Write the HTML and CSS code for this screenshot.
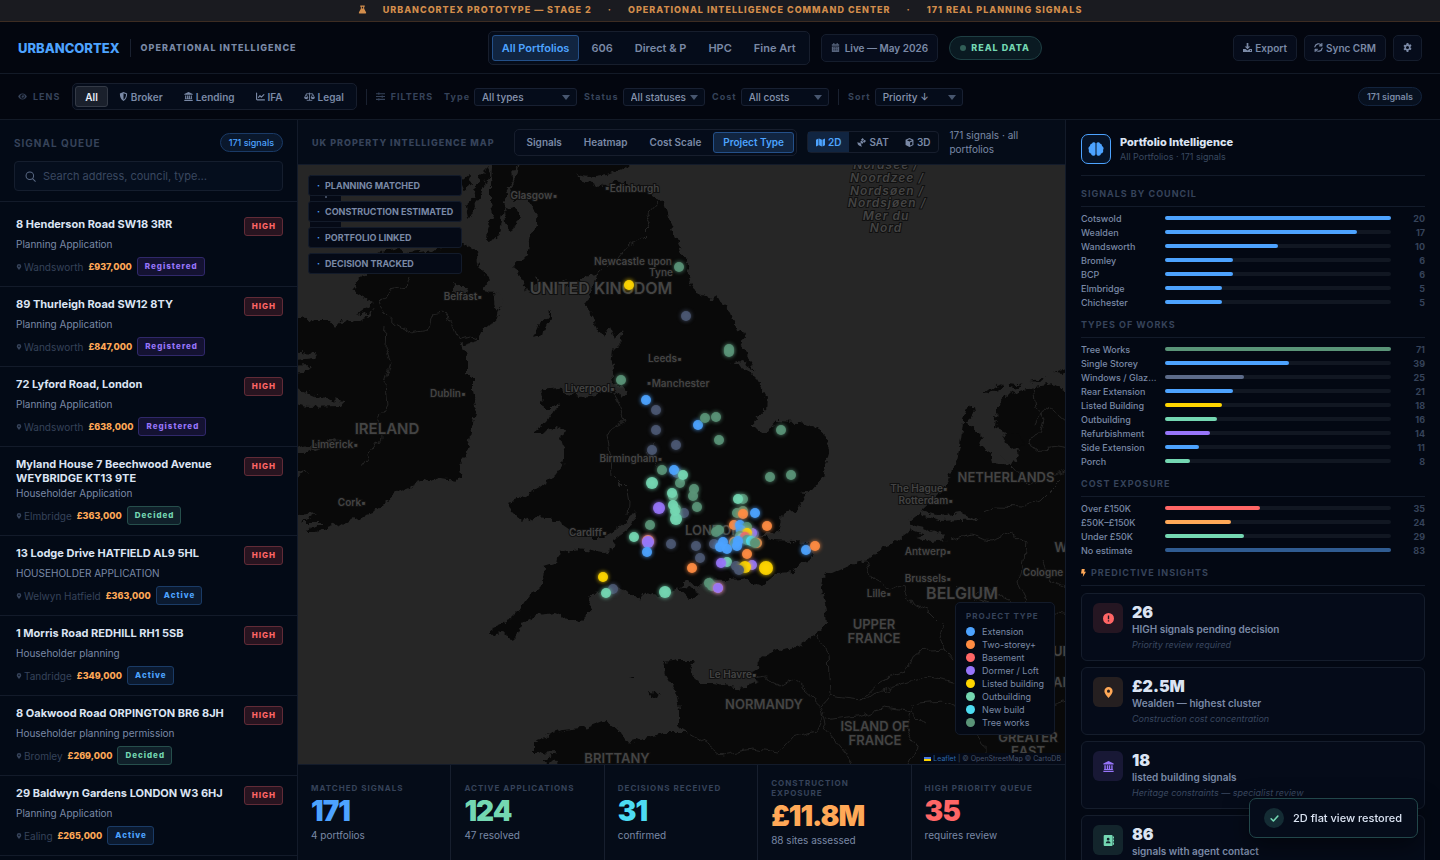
FILE: index.html
```html
<!DOCTYPE html>
<html lang="en">
<head>
    <meta charset="UTF-8">
    <meta name="viewport" content="width=device-width, initial-scale=1.0">
    <title>UrbanCortex - Operational Intelligence</title>
    <link rel="stylesheet" href="styles.css">
</head>
<body>
    <svg class="sprite" aria-hidden="true">
        <symbol id="i-flask" viewBox="0 0 16 16"><path d="M4 1h8v2h-1v3.500l3.300 6.200A1.600 1.600 0 0 1 12.900 15H3.100a1.600 1.600 0 0 1-1.400-2.300L5 6.500V3H4zM6.800 3v3h2.400V3z" fill-rule="evenodd"/></symbol>
        <symbol id="i-eye" viewBox="0 0 16 16"><path d="M8 2.500C4 2.500 1.300 5.500.3 8c1 2.500 3.700 5.500 7.700 5.500s6.700-3 7.700-5.500c-1-2.500-3.700-5.500-7.700-5.500zM8 4a4 4 0 1 1 0 8 4 4 0 0 1 0-8zm0 1.500A2 2 0 0 1 6 8a2.300 2.300 0 1 0 2-2.500z" fill-rule="evenodd"/></symbol>
        <symbol id="i-shield" viewBox="0 0 16 16"><path d="M8 0l6.500 2.600C14.500 8.500 12.500 13.500 8 16 3.500 13.500 1.500 8.500 1.500 2.600zM8 2.200v11.500c3-2 4.400-5.500 4.500-9.700z" fill-rule="evenodd"/></symbol>
        <symbol id="i-bank" viewBox="0 0 16 16"><path d="M8 0l7.500 3.500V5H.5V3.500zM2 6h2v5.500h1.500V6h2v5.500h1V6h2v5.500H12V6h2v5.500l1 1.500H1l1-1.500zM.5 14h15v2H.5z"/></symbol>
        <symbol id="i-chart" viewBox="0 0 16 16"><path d="M1 2v10.500a1.500 1.500 0 0 0 1.500 1.500H15M4.500 9.500L7 6.500l2.500 2.500L14 4.500" fill="none" stroke="currentColor" stroke-width="2" stroke-linecap="round" stroke-linejoin="round"/></symbol>
        <symbol id="i-scale" viewBox="0 0 20 16"><path d="M4 3h12M10 1v13.500M5 15h10M1 10l3-6 3 6zM13 10l3-6 3 6z" fill="none" stroke="currentColor" stroke-width="1.500" stroke-linejoin="round"/><path d="M.5 10h7a3.500 3 0 0 1-7 0zM12.500 10h7a3.500 3 0 0 1-7 0z"/></symbol>
        <symbol id="i-sliders" viewBox="0 0 16 16"><path d="M0 3h16M0 8h16M0 13h16M5 1v4M11 6v4M5 11v4" fill="none" stroke="currentColor" stroke-width="2"/></symbol>
        <symbol id="i-calendar" viewBox="0 0 16 16"><path d="M4 0h2v2h4V0h2v2h2.500v3h-13V2H4zM1.500 6h13v10h-13zM4 8v1.500h2V8zm3 0v1.500h2V8zm3 0v1.500h2V8zm-6 3.500V13h2v-1.500zm3 0V13h2v-1.500zm3 0V13h2v-1.500z" fill-rule="evenodd"/></symbol>
        <symbol id="i-download" viewBox="0 0 16 16"><path d="M6.500 0h3v6H13L8 11 3 6h3.500zM0 10.500h4.500L8 13.500l3.500-3H16V16H0zM12.500 12.500v1.500H14v-1.500z" fill-rule="evenodd"/></symbol>
        <symbol id="i-sync" viewBox="0 0 16 16"><path d="M1.500 7a6.500 6.500 0 0 1 12-2.500M14.500 9a6.500 6.500 0 0 1-12 2.500M14 .8V5H9.800M2 15.200V11h4.200" fill="none" stroke="currentColor" stroke-width="2" stroke-linecap="round" stroke-linejoin="round"/></symbol>
        <symbol id="i-gear" viewBox="0 0 16 16"><path d="M6.500 0h3l.5 2.300 1.400.8 2.200-.7 1.500 2.600-1.700 1.600v1.800l1.700 1.600-1.500 2.600-2.200-.7-1.400.8L9.500 16h-3L6 13.200l-1.400-.8-2.200.7L.9 10.500l1.700-1.600V7.100L.9 5.500l1.500-2.600 2.200.7L6 2.300zM8 5.300a2.700 2.700 0 1 0 0 5.400 2.700 2.700 0 0 0 0-5.400z" fill-rule="evenodd"/></symbol>
        <symbol id="i-search" viewBox="0 0 16 16"><path d="M7 1.500a5.500 5.500 0 1 1 0 11 5.500 5.500 0 0 1 0-11zM11 11l4 4" fill="none" stroke="currentColor" stroke-width="1.500" stroke-linecap="round"/></symbol>
        <symbol id="i-pin" viewBox="0 0 16 16"><path d="M8 0a6 6 0 0 1 6 6c0 3-3 6.500-6 10C5 12.500 2 9 2 6a6 6 0 0 1 6-6zm0 3.800a2.200 2.200 0 1 0 0 4.400 2.200 2.200 0 0 0 0-4.400z" fill-rule="evenodd"/></symbol>
        <symbol id="i-map" viewBox="0 0 16 16"><path d="M0 3l4.500-2v12L0 15zM5.500 1l5 2v12l-5-2zM11.500 3L16 1v12l-4.500 2z"/></symbol>
        <symbol id="i-sat" viewBox="0 0 16 16"><path d="M1 7a7 7 0 0 0 8 8l-2-3 1-1-3-3-1 1zM7 3l3-3 2.500 2.500L10 5.500zM10.500 6l3-3L16 5.500l-3 3zM8 4.500L11.500 8 9 10.500 5.500 7z"/></symbol>
        <symbol id="i-cube" viewBox="0 0 16 16"><path d="M8 0l7 3.200v9.300L8 16l-7-3.500V3.200zM8 2L3.500 4 8 6.200 12.500 4zM9 8v5.500l4-2V6z" fill-rule="evenodd"/></symbol>
        <symbol id="i-brain" viewBox="0 0 16 16"><path d="M7.500 2.300A2 2 0 0 0 4 2.500 2.300 2.300 0 0 0 2 5a2.600 2.600 0 0 0-1 4 2.600 2.600 0 0 0 2 3.600 2.300 2.300 0 0 0 4.500.600zM8.500 2.300A2 2 0 0 1 12 2.500 2.300 2.300 0 0 1 14 5a2.600 2.600 0 0 1 1 4 2.600 2.600 0 0 1-2 3.600 2.300 2.300 0 0 1-4.500.600z"/></symbol>
        <symbol id="i-bolt" viewBox="0 0 10 16"><path d="M1.500 0h6L6.500 5.500H10L3.500 16l1-7H0z"/></symbol>
        <symbol id="i-alert" viewBox="0 0 16 16"><path d="M8 0a8 8 0 1 1 0 16A8 8 0 0 1 8 0zM7 3.500v5.500h2V3.500zM7 10.500v2h2v-2z" fill-rule="evenodd"/></symbol>
        <symbol id="i-book" viewBox="0 0 16 16"><path d="M2.500 0h10A1.500 1.500 0 0 1 14 1.500v13a1.500 1.500 0 0 1-1.500 1.500h-10A1.500 1.500 0 0 1 1 14.500v-13A1.500 1.500 0 0 1 2.500 0zM7.500 4a2 2 0 1 0 0 4 2 2 0 0 0 0-4zM4 12h7a3 3 0 0 0-3-3H7a3 3 0 0 0-3 3zM14.500 2H16v3h-1.500zM14.500 6.500H16v3h-1.500zM14.500 11H16v3h-1.500z" fill-rule="evenodd"/></symbol>
        <symbol id="i-check" viewBox="0 0 16 16"><path d="M2 8.500l4 4 8-9" fill="none" stroke="currentColor" stroke-width="2.800" stroke-linecap="round" stroke-linejoin="round"/></symbol>
    </svg>

    <div class="banner">
        <svg class="icon"><use href="#i-flask"/></svg>
        <span>URBANCORTEX PROTOTYPE — STAGE 2</span><span>·</span><span>OPERATIONAL INTELLIGENCE COMMAND CENTER</span><span>·</span><span>171 REAL PLANNING SIGNALS</span>
    </div>

    <header class="topbar">
        <div class="brand">
            <span class="brand-name">URBANCORTEX</span>
            <span class="brand-sub">OPERATIONAL INTELLIGENCE</span>
        </div>
        <div class="topbar-center">
            <nav class="segment portfolios">
                <button type="button" class="active">All Portfolios</button>
                <button type="button">606</button>
                <button type="button">Direct &amp; P</button>
                <button type="button">HPC</button>
                <button type="button">Fine Art</button>
            </nav>
            <span class="live"><svg class="icon"><use href="#i-calendar"/></svg>Live — May 2026</span>
            <span class="real-data">REAL DATA</span>
        </div>
        <div class="actions">
            <button type="button"><svg class="icon"><use href="#i-download"/></svg>Export</button>
            <button type="button"><svg class="icon"><use href="#i-sync"/></svg>Sync CRM</button>
            <button type="button" aria-label="Settings"><svg class="icon"><use href="#i-gear"/></svg></button>
        </div>
    </header>

    <div class="filterbar">
        <span class="bar-label lens-label"><svg class="icon"><use href="#i-eye"/></svg>LENS</span>
        <div class="segment lens">
            <button type="button" class="active">All</button>
            <button type="button"><svg class="icon"><use href="#i-shield"/></svg>Broker</button>
            <button type="button"><svg class="icon"><use href="#i-bank"/></svg>Lending</button>
            <button type="button"><svg class="icon"><use href="#i-chart"/></svg>IFA</button>
            <button type="button"><svg class="icon wide"><use href="#i-scale"/></svg>Legal</button>
        </div>
        <span class="divider"></span>
        <span class="bar-label"><svg class="icon"><use href="#i-sliders"/></svg>FILTERS</span>
        <div class="field field-type"><label for="f-type">Type</label><span class="select"><select id="f-type"><option>All types</option></select></span></div>
        <div class="field field-status"><label for="f-status">Status</label><span class="select"><select id="f-status"><option>All statuses</option></select></span></div>
        <div class="field field-cost"><label for="f-cost">Cost</label><span class="select"><select id="f-cost"><option>All costs</option></select></span></div>
        <span class="divider"></span>
        <div class="field field-sort"><label for="f-sort">Sort</label><span class="select"><select id="f-sort"><option>Priority ↓</option></select></span></div>
        <span class="pill count">171 signals</span>
    </div>

    <main class="workspace">
        <aside class="queue">
            <div class="queue-head">
                <div class="queue-title"><h2>SIGNAL QUEUE</h2><span class="pill">171 signals</span></div>
                <label class="search"><svg class="icon"><use href="#i-search"/></svg><input type="text" aria-label="Search signals" placeholder="Search address, council, type…"></label>
            </div>
            <div class="queue-list">
                <article class="signal">
                    <div class="signal-top"><h3>8 Henderson Road SW18 3RR</h3><span class="priority">HIGH</span></div>
                    <p>Planning Application</p>
                    <div class="meta"><svg class="icon"><use href="#i-pin"/></svg><span>Wandsworth</span><b>£937,000</b><span class="status registered">Registered</span></div>
                </article>
                <article class="signal">
                    <div class="signal-top"><h3>89 Thurleigh Road SW12 8TY</h3><span class="priority">HIGH</span></div>
                    <p>Planning Application</p>
                    <div class="meta"><svg class="icon"><use href="#i-pin"/></svg><span>Wandsworth</span><b>£847,000</b><span class="status registered">Registered</span></div>
                </article>
                <article class="signal">
                    <div class="signal-top"><h3>72 Lyford Road, London</h3><span class="priority">HIGH</span></div>
                    <p>Planning Application</p>
                    <div class="meta"><svg class="icon"><use href="#i-pin"/></svg><span>Wandsworth</span><b>£638,000</b><span class="status registered">Registered</span></div>
                </article>
                <article class="signal">
                    <div class="signal-top"><h3>Myland House 7 Beechwood Avenue WEYBRIDGE KT13 9TE</h3><span class="priority">HIGH</span></div>
                    <p>Householder Application</p>
                    <div class="meta"><svg class="icon"><use href="#i-pin"/></svg><span>Elmbridge</span><b>£363,000</b><span class="status decided">Decided</span></div>
                </article>
                <article class="signal">
                    <div class="signal-top"><h3>13 Lodge Drive HATFIELD AL9 5HL</h3><span class="priority">HIGH</span></div>
                    <p>HOUSEHOLDER APPLICATION</p>
                    <div class="meta"><svg class="icon"><use href="#i-pin"/></svg><span>Welwyn Hatfield</span><b>£363,000</b><span class="status">Active</span></div>
                </article>
                <article class="signal">
                    <div class="signal-top"><h3>1 Morris Road REDHILL RH1 5SB</h3><span class="priority">HIGH</span></div>
                    <p>Householder planning</p>
                    <div class="meta"><svg class="icon"><use href="#i-pin"/></svg><span>Tandridge</span><b>£349,000</b><span class="status">Active</span></div>
                </article>
                <article class="signal">
                    <div class="signal-top"><h3>8 Oakwood Road ORPINGTON BR6 8JH</h3><span class="priority">HIGH</span></div>
                    <p>Householder planning permission</p>
                    <div class="meta"><svg class="icon"><use href="#i-pin"/></svg><span>Bromley</span><b>£269,000</b><span class="status decided">Decided</span></div>
                </article>
                <article class="signal">
                    <div class="signal-top"><h3>29 Baldwyn Gardens LONDON W3 6HJ</h3><span class="priority">HIGH</span></div>
                    <p>Planning Application</p>
                    <div class="meta"><svg class="icon"><use href="#i-pin"/></svg><span>Ealing</span><b>£265,000</b><span class="status">Active</span></div>
                </article>
            </div>
        </aside>

        <section class="center">
            <div class="map-head">
                <h2>UK PROPERTY INTELLIGENCE MAP</h2>
                <div class="segment modes">
                    <button type="button">Signals</button>
                    <button type="button">Heatmap</button>
                    <button type="button">Cost Scale</button>
                    <button type="button" class="active">Project Type</button>
                </div>
                <div class="views">
                    <button type="button" class="active"><svg class="icon"><use href="#i-map"/></svg>2D</button>
                    <button type="button"><svg class="icon"><use href="#i-sat"/></svg>SAT</button>
                    <button type="button"><svg class="icon"><use href="#i-cube"/></svg>3D</button>
                </div>
                <p>171 signals · all portfolios</p>
            </div>

            <div class="map">
                <svg class="map-canvas" viewBox="298 165 767 599" preserveAspectRatio="xMidYMid slice" role="img" aria-label="Map of signals">
                    <defs>
                        <filter id="coast" x="0" y="0" width="100%" height="100%" color-interpolation-filters="sRGB">
                            <feTurbulence type="fractalNoise" baseFrequency="0.14" numOctaves="3" seed="7"/>
                            <feDisplacementMap in="SourceGraphic" scale="9" xChannelSelector="R" yChannelSelector="G"/>
                        </filter>
                        <filter id="wobble" x="0" y="0" width="100%" height="100%" color-interpolation-filters="sRGB">
                            <feTurbulence type="fractalNoise" baseFrequency="0.09" numOctaves="2" seed="3"/>
                            <feDisplacementMap in="SourceGraphic" scale="10" xChannelSelector="R" yChannelSelector="G"/>
                        </filter>
                    </defs>
                    <g filter="url(#coast)">
                        <rect class="sea" x="270" y="140" width="830" height="660"/>
                        <!-- Great Britain -->
                        <path class="land" d="M493 150 L492 165 491 187 491 203 493 215 488 228 487 240 498 239 500 227 503 210 506 193 513 180 512 172 520 163 516 177 511 190 514 200 526 198 530 204 539 215 537 227 531 234 529 247 526 257 519 264 515 263 516 270 522 280 526 291 531 293 534 285 537 277 543 285 550 290 557 285 563 280 570 288 578 281 589 275 595 274 604 266 596 275 593 286 586 301 588 307 596 323 603 337 609 327 615 339 621 330 622 341 613 350 611 366 616 362 611 373 614 383 628 390 622 397 613 391 603 390 596 395 580 397 563 393 558 398 560 404 546 423 534 433 543 433 556 427 564 430 561 440 565 453 563 465 553 478 541 486 526 495 510 502 513 513 523 522 536 517 549 518 563 525 573 532 586 537 603 537 616 530 630 517 635 510 636 517 628 530 614 540 613 550 602 553 579 549 559 553 557 563 544 567 543 583 529 597 519 610 509 620 493 627 491 635 503 633 513 640 523 623 536 615 556 613 579 623 589 613 592 593 606 592 616 587 629 592 638 597 639 602 642 593 659 597 679 588 688 580 697 588 705 579 723 580 740 578 762 586 777 573 793 572 797 565 813 557 812 550 807 543 793 542 773 541 760 535 780 530 783 513 797 510 807 493 800 492 812 490 823 477 828 457 829 450 827 440 817 427 797 422 775 421 767 432 760 433 752 425 765 410 766 397 757 380 747 370 738 364 730 364 740 360 756 371 747 357 740 340 746 333 738 330 732 313 723 303 710 297 697 294 688 277 687 263 679 243 669 220 663 203 656 197 643 187 629 185 616 181 603 187 589 183 576 175 589 177 607 174 629 166 635 150Z"/>
                        <path class="land" d="M480 175l8-8 2 8-8 16-3 10-5-2 2-12zM504 209l9-3 5 8-1 12-6 4-6-7zM466 204l9-8 1 14-8 8zM540 389l20-2 4 9-10 12-10 0zM552 311l0 8-10 16-9 3 5-12zM678 588l10-2 12 8-10 5zM460 182l8-6 4 8-9 6z"/>
                        <!-- Ireland -->
                        <path class="land" d="M285 318 L298 318 316 320 329 320 336 328 343 320 359 322 376 310 356 315 373 303 351 290 363 277 368 263 376 253 399 248 409 253 436 250 453 243 463 243 476 250 478 263 489 282 483 290 498 293 501 307 496 322 483 327 478 340 461 345 466 357 466 373 473 377 473 393 476 407 473 423 469 443 463 460 459 467 461 480 439 478 423 482 396 492 373 513 336 525 313 533 303 533 323 522 301 522 316 513 298 515 285 515Z"/>
                        <path class="sea" d="M285 351l32 2-2 6-30 3zM285 366l26-1-8 7-18 2zM298 388l18 8 28 5-4 5-32 1-16-3zM285 450l40-8 14-4-9 8-45 12zM285 470l24 2-24 7z"/>
                        <path class="sea" d="M494 290l6 4 2 10-5 10-2-12zM453 284l8 2 6 0-3 8-8-1z"/>
                        <!-- Continent -->
                        <path class="land" d="M1100 395 L1065 390 1053 384 1030 388 1010 393 997 407 995 427 1007 432 1003 443 1020 450 1010 466 992 463 990 452 980 446 983 437 968 423 963 423 960 447 957 460 950 477 940 493 920 512 910 520 907 533 893 543 867 560 850 565 823 577 822 590 825 602 827 625 817 633 797 647 777 650 760 658 752 677 760 680 740 688 713 683 697 683 690 670 693 660 680 660 663 662 666 673 676 690 679 710 679 727 689 733 663 733 649 737 629 743 619 730 606 720 589 727 563 730 543 737 534 743 534 753 556 752 543 762 559 763 540 775 540 800 1100 800Z"/>
                        <path class="land" d="M963 420l4-12 6-3 1 8-8 10zM983 391l20-7 1 3-18 6zM1008 383l15 2-12 3zM1030 381l16-4-6 5zM1054 373l14-5-4 6zM630 677l4-2 0 3zM648 692l10 1-2 4-6-1zM1006 434l12-1 6 10-10 6-8-6z"/>
                        <path class="sea" d="M907 524l18 4 20 7-4 4-22-5-10-4zM918 510l22 6 20-3 20 6-18 1-22 1-16-4zM916 538l14-3 16 5-14 2z"/>
                    </g>
                    <!-- Borders -->
                    <g filter="url(#wobble)">
                        <path class="border" d="M409 276l-3 10-18 4-9 16 15 17 18 10 15-3 5-16 12-2 9 14 5 12 10-3 9 4M386 327l-1 20 6 15-6 20 2 25-8 12 1 20-19 27M659 200l-13 14 6 14-10 10-14 8-10 12-12 10M611 391l8 14 6 15-12 6-6 10 4 20 1 20 15 15 2 12-1 12M655 440l-8 12 10 15M1033 388l3 20 8 12-4 14-12 6M1036 425l10-20 14 12 10 8M1028 440l6 10 24-3 12 2M1000 455l12 12 16 18 24-8 14-6M983 512l14-5 24 1 20-8 20-20M952 540l18-6 20 6 22-8 14 10-2 20-6 22 8 16-10 12-24-8-18-6M866 562l6 16 18 12 12-6 10 20 18 8 12 12-4 16 14 18M956 585l14 12 20-8 20 12 12 22 30-10 20 4M816 635l12 20 2 40-8 10M830 695l30 4 40-14 30-8 30 6 20-14 20 10M860 699l20-19 26-8 10-20 30-2M820 705l6 24 20 24 12 18M826 720l30-4 30-8 26 4 14 12M914 704l-8 24 12 20-10 18M746 680l20-3 16 8 10-6 14 12 16 14M910 704l30-3 30 14 14 30 0 25M690 733l20 12 12 10 30-6 26 4 14-16 24-6 8-18M1020 700l20 10 30-10M1042 560l8 20 20 10"/>
                    </g>
                    <g class="labels">
                        <g class="sea-name">
                            <text x="886" y="169">Nordsee /</text><text x="887" y="182">Noordzee /</text><text x="887" y="195">Nordsøen /</text><text x="887" y="207">Nordsjøen /</text><text x="886" y="220">Mer du</text><text x="886" y="232">Nord</text>
                        </g>
                        <g class="country">
                            <text x="601" y="294">UNITED KINGDOM</text><text x="387" y="434" class="mid">IRELAND</text><text x="1006" y="482" class="region">NETHERLANDS</text><text x="962" y="599">BELGIUM</text><text x="713" y="535" class="region">LONDON</text>
                        </g>
                        <g class="country region">
                            <text x="874" y="629">UPPER</text><text x="874" y="643">FRANCE</text><text x="764" y="709">NORMANDY</text><text x="875" y="731">ISLAND OF</text><text x="875" y="745">FRANCE</text><text x="617" y="763">BRITTANY</text><text x="1028" y="742">GREATER</text><text x="1028" y="756">EAST</text><text x="1061" y="552">W</text><text x="1062" y="656">UR</text><text x="1062" y="687">AR</text>
                        </g>
                        <g class="city">
                            <text x="534" y="199">Glasgow▪</text><text x="632" y="192">▪Edinburgh</text><text x="633" y="265">Newcastle upon</text><text x="661" y="276">Tyne</text><text x="463" y="300">Belfast▪</text><text x="448" y="397">Dublin▪</text><text x="335" y="448">Limerick▪</text><text x="352" y="506">Cork▪</text><text x="665" y="362">Leeds▪</text><text x="678" y="387">▪Manchester</text><text x="590" y="392">Liverpool▪</text><text x="631" y="462">Birmingham▪</text><text x="588" y="536">Cardiff▪</text><text x="919" y="492">The Hague▪</text><text x="926" y="504">Rotterdam▪</text><text x="928" y="555">Antwerp▪</text><text x="928" y="582">Brussels▪</text><text x="879" y="597">Lille▪</text><text x="1043" y="576">Cologne</text><text x="733" y="678">Le Havre▪</text>
                        </g>
                    </g>
                    <g id="pins"></g>
                </svg>

                <div class="zoom">
                    <button type="button" aria-label="Zoom in"><svg viewBox="0 0 10 10"><path d="M5 0v10M0 5h10"/></svg></button>
                    <button type="button" aria-label="Zoom out"><svg viewBox="0 0 10 10"><path d="M0 5h10"/></svg></button>
                </div>
                <ul class="tags">
                    <li>PLANNING MATCHED</li>
                    <li>CONSTRUCTION ESTIMATED</li>
                    <li>PORTFOLIO LINKED</li>
                    <li>DECISION TRACKED</li>
                </ul>
                <div class="legend">
                    <h4>PROJECT TYPE</h4>
                    <ul>
                        <li class="blue">Extension</li>
                        <li class="orange">Two-storey+</li>
                        <li class="red">Basement</li>
                        <li class="purple">Dormer / Loft</li>
                        <li class="yellow">Listed building</li>
                        <li class="mint">Outbuilding</li>
                        <li class="cyan">New build</li>
                        <li class="green">Tree works</li>
                    </ul>
                </div>
                <div class="attribution"><span class="flag"></span><a href="#">Leaflet</a> | © OpenStreetMap © CartoDB</div>
            </div>

            <div class="stats">
                <div class="stat blue"><h4>MATCHED SIGNALS</h4><strong>171</strong><p>4 portfolios</p></div>
                <div class="stat mint"><h4>ACTIVE APPLICATIONS</h4><strong>124</strong><p>47 resolved</p></div>
                <div class="stat cyan"><h4>DECISIONS RECEIVED</h4><strong>31</strong><p>confirmed</p></div>
                <div class="stat amber"><h4>CONSTRUCTION EXPOSURE</h4><strong>£11.8M</strong><p>88 sites assessed</p></div>
                <div class="stat red"><h4>HIGH PRIORITY QUEUE</h4><strong>35</strong><p>requires review</p></div>
            </div>
        </section>

        <aside class="intel">
            <div class="intel-head">
                <span class="intel-icon"><svg class="icon"><use href="#i-brain"/></svg></span>
                <div><h2>Portfolio Intelligence</h2><p>All Portfolios · 171 signals</p></div>
            </div>

            <h4>SIGNALS BY COUNCIL</h4>
            <div class="bars">
                <div class="bar blue"><span>Cotswold</span><i><em style="width:100%"></em></i><b>20</b></div>
                <div class="bar blue"><span>Wealden</span><i><em style="width:85%"></em></i><b>17</b></div>
                <div class="bar blue"><span>Wandsworth</span><i><em style="width:50%"></em></i><b>10</b></div>
                <div class="bar blue"><span>Bromley</span><i><em style="width:30%"></em></i><b>6</b></div>
                <div class="bar blue"><span>BCP</span><i><em style="width:30%"></em></i><b>6</b></div>
                <div class="bar blue"><span>Elmbridge</span><i><em style="width:25%"></em></i><b>5</b></div>
                <div class="bar blue"><span>Chichester</span><i><em style="width:25%"></em></i><b>5</b></div>
            </div>

            <h4>TYPES OF WORKS</h4>
            <div class="bars">
                <div class="bar green"><span>Tree Works</span><i><em style="width:100%"></em></i><b>71</b></div>
                <div class="bar blue"><span>Single Storey</span><i><em style="width:55%"></em></i><b>39</b></div>
                <div class="bar slate"><span>Windows / Glazing</span><i><em style="width:35%"></em></i><b>25</b></div>
                <div class="bar blue"><span>Rear Extension</span><i><em style="width:30%"></em></i><b>21</b></div>
                <div class="bar yellow"><span>Listed Building</span><i><em style="width:25%"></em></i><b>18</b></div>
                <div class="bar mint"><span>Outbuilding</span><i><em style="width:23%"></em></i><b>16</b></div>
                <div class="bar purple"><span>Refurbishment</span><i><em style="width:20%"></em></i><b>14</b></div>
                <div class="bar blue"><span>Side Extension</span><i><em style="width:15%"></em></i><b>11</b></div>
                <div class="bar mint"><span>Porch</span><i><em style="width:11%"></em></i><b>8</b></div>
            </div>

            <h4>COST EXPOSURE</h4>
            <div class="bars">
                <div class="bar red"><span>Over £150K</span><i><em style="width:42%"></em></i><b>35</b></div>
                <div class="bar amber"><span>£50K–£150K</span><i><em style="width:29%"></em></i><b>24</b></div>
                <div class="bar mint"><span>Under £50K</span><i><em style="width:35%"></em></i><b>29</b></div>
                <div class="bar navy"><span>No estimate</span><i><em style="width:100%"></em></i><b>83</b></div>
            </div>

            <h4><svg class="icon bolt"><use href="#i-bolt"/></svg>PREDICTIVE INSIGHTS</h4>
            <div class="insights">
                <div class="insight red">
                    <span class="insight-icon"><svg class="icon"><use href="#i-alert"/></svg></span>
                    <div><strong>26</strong><p>HIGH signals pending decision</p><small>Priority review required</small></div>
                </div>
                <div class="insight amber">
                    <span class="insight-icon"><svg class="icon"><use href="#i-pin"/></svg></span>
                    <div><strong>£2.5M</strong><p>Wealden — highest cluster</p><small>Construction cost concentration</small></div>
                </div>
                <div class="insight purple">
                    <span class="insight-icon"><svg class="icon"><use href="#i-bank"/></svg></span>
                    <div><strong>18</strong><p>listed building signals</p><small>Heritage constraints — specialist review</small></div>
                </div>
                <div class="insight mint">
                    <span class="insight-icon"><svg class="icon"><use href="#i-book"/></svg></span>
                    <div><strong>86</strong><p>signals with agent contact</p></div>
                </div>
            </div>
        </aside>
    </main>

    <div class="toast" role="status"><span><svg class="icon"><use href="#i-check"/></svg></span>2D flat view restored</div>

    <script>
        // [type, x, y, radius]
        const pins = [
            ['green', 679, 267], ['yellow', 629, 285], ['slate', 686, 316], ['green', 729, 349], ['green', 729, 352],
            ['green', 621, 380], ['blue', 646, 400], ['slate', 656, 410], ['slate', 656, 430], ['blue', 698, 425],
            ['green', 705, 418], ['green', 716, 417], ['green', 719, 440], ['green', 781, 430], ['slate', 676, 445],
            ['slate', 652, 450], ['green', 662, 470], ['slate', 677, 473], ['blue', 674, 470], ['green', 680, 483],
            ['mint', 683, 475], ['mint', 652, 483, 6], ['green', 694, 489], ['green', 693, 496], ['green', 697, 507],
            ['green', 673, 496], ['mint', 672, 493], ['slate', 684, 513], ['purple', 659, 508, 6], ['green', 676, 509],
            ['mint', 673, 505], ['mint', 675, 511], ['mint', 676, 519, 6], ['green', 650, 525], ['mint', 634, 537],
            ['orange', 648, 541, 6], ['purple', 648, 542, 6], ['blue', 647, 552], ['slate', 671, 544], ['slate', 696, 546],
            ['slate', 700, 558], ['orange', 692, 568], ['yellow', 603, 577], ['slate', 613, 589], ['mint', 606, 593],
            ['mint', 665, 592, 6], ['green', 709, 583], ['green', 712, 586], ['orange', 718, 588], ['purple', 718, 588],
            ['mint', 727, 562], ['purple', 721, 563], ['slate', 736, 566], ['purple', 752, 565], ['yellow', 745, 567, 6],
            ['slate', 739, 570], ['yellow', 766, 568, 7], ['orange', 747, 554], ['green', 770, 477], ['green', 791, 475],
            ['green', 743, 499], ['mint', 738, 499], ['green', 737, 513], ['green', 743, 511], ['orange', 743, 514],
            ['blue', 755, 513], ['orange', 767, 526], ['blue', 806, 550], ['orange', 815, 546], ['green', 716, 532],
            ['green', 719, 530], ['orange', 734, 525], ['slate', 754, 534], ['purple', 752, 533], ['blue', 740, 525],
            ['green', 747, 527], ['blue', 741, 530], ['yellow', 747, 533], ['green', 740, 536], ['mint', 742, 538],
            ['red', 745, 537], ['green', 747, 540], ['slate', 714, 544], ['orange', 734, 542], ['green', 735, 543],
            ['blue', 738, 541], ['blue', 737, 546], ['blue', 723, 542], ['blue', 720, 547], ['blue', 727, 549],
            ['cyan', 751, 541], ['orange', 757, 543], ['green', 755, 543]
        ];

        const layer = document.getElementById('pins');
        pins.forEach(([type, x, y, radius]) => {
            const dot = document.createElementNS('http://www.w3.org/2000/svg', 'circle');
            dot.setAttribute('class', 'pin ' + type);
            dot.setAttribute('cx', x);
            dot.setAttribute('cy', y);
            dot.setAttribute('r', radius || 5);
            layer.appendChild(dot);
        });
    </script>
</body>
</html>
```
FILE: styles.css
```css
* {
    box-sizing: border-box;
}
body {
    display: flex;
    flex-direction: column;
    height: 100vh;
    margin: 0;
    overflow: hidden;
    background-color: #03060f;
    color: #7a89a6;
    font-family: Inter, sans-serif;
    font-size: 10px;
}
h2, h3, h4, p, ul {
    margin: 0;
    padding: 0;
    list-style: none;
}
button, input, select {
    font: inherit;
    color: inherit;
}
button {
    display: flex;
    align-items: center;
    gap: 3px;
    border: 1px solid transparent;
    background: none;
    cursor: pointer;
    white-space: nowrap;
}
.sprite {
    position: absolute;
    width: 0;
    height: 0;
}
.icon {
    display: block;
    width: 9px;
    height: 9px;
    flex: none;
    fill: currentColor;
}
.icon.wide {
    width: 11px;
}
.blue { color: #4da3ff; }
.orange { color: #ff8c42; }
.red { color: #ff6666; }
.purple { color: #9775fa; }
.yellow { color: #ffd600; }
.mint { color: #74d7b2; }
.cyan { color: #4ddcf2; }
.green { color: #5a9478; }
.amber { color: #ffa857; }
.slate { color: #5c6b8a; }
.navy { color: #305c92; }

/* Top bars */
.banner {
    display: flex;
    flex: none;
    justify-content: center;
    align-items: center;
    gap: 16px;
    height: 22px;
    padding-bottom: 2px;
    border-bottom: 1px solid #3d2c22;
    background-color: #1a1b20;
    color: #d28d4c;
    font-size: 9px;
    font-weight: 800;
    letter-spacing: 1px;
}
.topbar {
    display: flex;
    flex: none;
    justify-content: space-between;
    align-items: center;
    height: 52px;
    padding: 0 18px;
    border-bottom: 1px solid #131a27;
}
.brand, .topbar-center, .actions {
    display: flex;
    align-items: center;
}
.brand-name {
    padding-right: 10px;
    border-right: 1px solid #1a2130;
    color: #4da3ff;
    font-size: 13px;
    font-weight: 800;
    line-height: 18px;
}
.brand-sub {
    padding-left: 10px;
    font-size: 9px;
    font-weight: 800;
    letter-spacing: 1px;
}
.topbar-center {
    gap: 11px;
}
.segment {
    display: flex;
    gap: 2px;
    padding: 2px;
    border: 1px solid #171e2d;
    border-radius: 5px;
    background-color: #050c1a;
    font-weight: 600;
}
.segment button {
    height: 21px;
    padding: 0 9px;
    border-radius: 3px;
}
.segment .active {
    border-color: #245089;
    background-color: #112541;
    color: #4da3ff;
}
.portfolios {
    padding: 3px;
    font-size: 11px;
}
.portfolios button {
    height: 26px;
}
.live, .actions button {
    display: flex;
    align-items: center;
    gap: 5px;
    height: 28px;
    padding: 0 9px;
    border: 1px solid #151d2d;
    border-radius: 5px;
    background-color: #060c1b;
    font-weight: 600;
}
.live .icon {
    color: #56637c;
}
.real-data {
    display: flex;
    align-items: center;
    gap: 5px;
    height: 24px;
    padding: 0 11px 0 10px;
    border: 1px solid #1e3f43;
    border-radius: 12px;
    background-color: #0a1a22;
    color: #74d7b2;
    font-size: 9px;
    font-weight: 800;
    letter-spacing: 1px;
}
.real-data::before {
    width: 6px;
    height: 6px;
    border-radius: 50%;
    background-color: #315f57;
    content: "";
}
.actions {
    gap: 7px;
}
.actions button {
    gap: 3px;
    height: 26px;
}
.filterbar {
    display: flex;
    flex: none;
    align-items: center;
    gap: 7px;
    height: 46px;
    padding: 0 18px;
    border-bottom: 1px solid #131a27;
}
.bar-label {
    display: flex;
    align-items: center;
    gap: 6px;
    color: #36435a;
    font-size: 9px;
    font-weight: 700;
    letter-spacing: 1px;
}
.lens-label {
    padding-right: 5px;
}
.lens {
    gap: 1px;
}
.lens .active {
    border-color: #343a46;
    background-color: #1a202c;
    color: #e6edf8;
}
.divider {
    width: 1px;
    height: 16px;
    margin: 0 2px;
    background-color: #1a2130;
}
.field {
    display: flex;
    align-items: center;
    gap: 4px;
    color: #36435a;
    font-size: 9px;
    font-weight: 700;
}
.field label {
    letter-spacing: 1px;
}
.select {
    position: relative;
    display: flex;
    flex: 1;
}
.select::after {
    position: absolute;
    top: 7px;
    right: 7px;
    border: 4px solid transparent;
    border-top: 5px solid #47566f;
    border-bottom: 0;
    content: "";
    pointer-events: none;
}
.select select {
    width: 100%;
    height: 18px;
    padding: 0 7px;
    border: 1px solid #182032;
    border-radius: 3px;
    appearance: none;
    background-color: #050c1a;
    color: #8794ae;
    font-size: 10px;
    font-weight: 500;
}
.field-type {
    width: 133px;
    margin-left: 4px;
}
.field-status {
    width: 121px;
}
.field-cost {
    width: 117px;
}
.field-sort {
    width: 115px;
}
.pill {
    height: 19px;
    padding: 0 8px;
    border: 1px solid #1a3a66;
    border-radius: 10px;
    background-color: #0a182c;
    color: #4da3ff;
    font-size: 9px;
    font-weight: 500;
    line-height: 17px;
}
.count {
    margin-left: auto;
    border-color: #13243e;
    background-color: #07101f;
    color: #7a89a6;
    font-weight: 600;
}

/* Three columns */
.workspace {
    display: grid;
    flex: 1;
    grid-template-columns: 298px 1fr 375px;
    min-height: 0;
}
.queue {
    display: flex;
    flex-direction: column;
    min-height: 0;
    overflow: hidden;
    border-right: 1px solid #131b2a;
    background-color: #030a16;
}
.queue-head {
    flex: none;
    padding: 13px 14px 10px;
    border-bottom: 1px solid #131b2a;
}
.queue-title {
    display: flex;
    justify-content: space-between;
    align-items: center;
    margin-bottom: 9px;
}
.queue-title h2, .map-head h2 {
    color: #36435a;
    font-size: 10px;
    font-weight: 700;
    letter-spacing: 1px;
    white-space: nowrap;
}
.map-head h2 {
    margin-right: 9px;
    font-size: 9px;
    font-weight: 800;
}
.search {
    display: flex;
    align-items: center;
    gap: 7px;
    height: 30px;
    padding: 0 10px;
    border: 1px solid #151e2e;
    border-radius: 4px;
    background-color: #050e1d;
    color: #5a6984;
}
.search .icon {
    width: 11px;
    height: 11px;
}
.search input {
    flex: 1;
    min-width: 0;
    padding: 0;
    border: 0;
    outline: 0;
    background: none;
    font-size: 11px;
}
.search input::placeholder {
    color: #3a4860;
}
.queue-list {
    padding-top: 5px;
    overflow: hidden;
}
.signal {
    padding: 10px 14px 10px 16px;
    border-bottom: 1px solid #131b2a;
}
.signal-top {
    display: flex;
    justify-content: space-between;
    align-items: flex-start;
    gap: 8px;
}
.signal h3 {
    color: #dbe4f3;
    font-size: 11px;
    font-weight: 700;
    line-height: 14px;
}
.signal p {
    margin-bottom: 5px;
    line-height: 16px;
}
.priority {
    height: 19px;
    padding: 0 6px 0 7px;
    border: 1px solid #612b37;
    border-radius: 3px;
    background-color: #281420;
    color: #ff6666;
    font-size: 8px;
    font-weight: 800;
    letter-spacing: 1px;
    line-height: 17px;
}
.meta {
    display: flex;
    align-items: center;
    color: #36435a;
}
.meta .icon {
    width: 6px;
    height: 8px;
    margin-right: 2px;
}
.meta b {
    margin: 0 5px;
    color: #ffa857;
    font-size: 9px;
    font-weight: 800;
}
.status {
    height: 19px;
    padding: 0 6px 0 7px;
    border: 1px solid #1a3b66;
    border-radius: 3px;
    background-color: #0b1a30;
    color: #4da3ff;
    font-size: 8px;
    font-weight: 800;
    letter-spacing: 1px;
    line-height: 17px;
}
.status.registered {
    border-color: #30286a;
    background-color: #141232;
    color: #9775fa;
}
.status.decided {
    border-color: #264f4c;
    background-color: #10202a;
    color: #74d7b2;
}

/* Map */
.center {
    display: flex;
    flex-direction: column;
    min-width: 0;
    min-height: 0;
}
.map-head {
    display: flex;
    flex: none;
    align-items: center;
    gap: 10px;
    height: 45px;
    padding: 0 14px;
    border-bottom: 1px solid #131b2a;
    background-color: #050c18;
}
.map-head p {
    max-width: 84px;
    line-height: 14px;
}
.views {
    display: flex;
    border: 1px solid #171e2d;
    border-radius: 4px;
    font-weight: 600;
}
.views button {
    height: 20px;
    padding: 0 8px;
    border: 0;
}
.views .active {
    background-color: #112541;
    color: #4da3ff;
}
.map {
    position: relative;
    flex: 1;
    min-height: 0;
    overflow: hidden;
    background-color: #262626;
}
.map-canvas {
    display: block;
    width: 100%;
    height: 100%;
}
.sea {
    fill: #262626;
}
.land {
    fill: #090909;
}
.border {
    fill: none;
    stroke: #242424;
    stroke-width: 1;
}
.labels {
    fill: #444;
    stroke: #101010;
    stroke-width: 2;
    paint-order: stroke;
    text-anchor: middle;
}
.country {
    font-size: 16px;
    font-weight: 600;
}
.country .mid {
    font-size: 15px;
}
.region, .country .region {
    font-size: 13px;
}
.city {
    font-size: 10px;
    font-weight: 600;
}
.sea-name {
    font-size: 12px;
    font-style: italic;
    font-weight: 600;
    letter-spacing: 1px;
}
.pin {
    fill: currentColor;
    fill-opacity: 0.9;
    filter: drop-shadow(0 0 2px currentColor);
}
.pin.slate {
    color: #4b5872;
}
.tags {
    position: absolute;
    top: 10px;
    left: 10px;
    display: grid;
    gap: 5px;
}
.tags li {
    height: 21px;
    padding: 0 8px;
    border: 1px solid #131b2a;
    border-radius: 3px;
    background-color: #050a16;
    font-size: 9px;
    font-weight: 700;
    line-height: 19px;
}
.tags li::before {
    margin-right: 5px;
    color: #4da3ff;
    content: "·";
}
.zoom {
    position: absolute;
    top: 10px;
    left: 12px;
}
.zoom button {
    align-items: flex-end;
    justify-content: center;
    width: 31px;
    height: 26px;
    padding: 0 0 2px;
    background-color: #050a16;
}
.zoom button + button {
    padding: 0;
}
.zoom svg {
    width: 10px;
    height: 10px;
    stroke: #7a89a6;
}
.legend {
    position: absolute;
    right: 10px;
    bottom: 29px;
    padding: 8px 10px 5px;
    border: 1px solid #131b2a;
    border-radius: 5px;
    background-color: #040914;
    font-size: 9px;
}
.legend h4 {
    margin-bottom: 4px;
    color: #36435a;
    font-size: 8px;
    font-weight: 700;
    letter-spacing: 1px;
    line-height: 10px;
}
.legend li {
    display: flex;
    align-items: center;
    gap: 7px;
    line-height: 13px;
    -webkit-text-fill-color: #7a89a6;
}
.legend li::before {
    width: 9px;
    height: 9px;
    border-radius: 50%;
    background-color: currentColor;
    content: "";
}
.attribution {
    position: absolute;
    right: 0;
    bottom: 0;
    display: flex;
    align-items: center;
    gap: 2px;
    padding: 0 4px;
    background-color: #050a16;
    color: #46536b;
    font-size: 7px;
    line-height: 11px;
}
.attribution a {
    color: #2b66a8;
    text-decoration: none;
}
.flag {
    width: 7px;
    height: 4px;
    border-bottom: 2px solid #ffd600;
    background-color: #4c7be1;
}
.stats {
    display: grid;
    flex: none;
    grid-template-columns: repeat(5, 1fr);
    height: 96px;
    border-top: 1px solid #131b2a;
    background-color: #050c18;
}
.stat {
    display: flex;
    flex-direction: column;
    justify-content: center;
    padding: 0 13px 1px;
    border-right: 1px solid #171f2e;
}
.stat:last-child {
    border-right: 0;
}
.stat h4 {
    color: #36435a;
    font-size: 8px;
    font-weight: 700;
    letter-spacing: 1px;
    line-height: 10px;
}
.stat strong {
    font-size: 28px;
    font-weight: 900;
    letter-spacing: -1px;
    line-height: 36px;
}
.stat p {
    color: #7a89a6;
    line-height: 13px;
}

/* Intelligence panel */
.intel {
    min-height: 0;
    padding: 14px 15px;
    overflow: hidden;
    border-left: 1px solid #131b2a;
    background-color: #030813;
}
.intel-head {
    display: flex;
    align-items: center;
    gap: 9px;
    padding-bottom: 11px;
    border-bottom: 1px solid #131b2a;
}
.intel-icon {
    display: grid;
    place-items: center;
    width: 30px;
    height: 30px;
    border: 1px solid #4da3ff;
    border-radius: 7px;
    background-color: #061327;
    color: #4da3ff;
}
.intel-icon .icon {
    width: 16px;
    height: 16px;
}
.intel-head h2 {
    color: #dbe4f3;
    font-size: 11px;
    font-weight: 800;
    line-height: 15px;
}
.intel-head p {
    color: #3a4860;
    font-size: 9px;
    line-height: 14px;
}
.intel h4 {
    display: flex;
    align-items: center;
    gap: 5px;
    margin: 10px 0 4px;
    padding-bottom: 6px;
    border-bottom: 1px solid #131b2a;
    color: #36435a;
    font-size: 9px;
    font-weight: 700;
    letter-spacing: 1px;
    line-height: 12px;
}
.intel .intel-head + h4 {
    margin-top: 12px;
}
.bar {
    display: grid;
    grid-template-columns: 77px 1fr 27px;
    align-items: center;
    gap: 7px;
    height: 14px;
    font-size: 9px;
}
.bar span {
    overflow: hidden;
    color: #7a89a6;
    font-weight: 500;
    text-overflow: ellipsis;
    white-space: nowrap;
}
.bar i {
    height: 4px;
    border-radius: 2px;
    background-color: #111722;
}
.bar em {
    display: block;
    height: 4px;
    border-radius: 2px;
    background-color: currentColor;
}
.bar b {
    color: #36435a;
    font-weight: 700;
    text-align: right;
}
.intel .bolt {
    width: 5px;
    height: 8px;
    color: #ffa857;
}
.insights {
    display: grid;
    gap: 6px;
    margin-top: 7px;
}
.insight {
    display: flex;
    gap: 9px;
    height: 68px;
    padding: 9px 11px;
    border: 1px solid #151d2c;
    border-radius: 6px;
    background-color: #050b19;
}
.insight-icon {
    position: relative;
    display: grid;
    place-items: center;
    width: 30px;
    height: 30px;
    overflow: hidden;
    border-radius: 6px;
}
.insight-icon::before {
    position: absolute;
    inset: 0;
    background-color: currentColor;
    opacity: 0.13;
    content: "";
}
.insight-icon .icon {
    width: 11px;
    height: 11px;
}
.insight strong {
    display: block;
    color: #dbe4f3;
    font-size: 16px;
    font-weight: 900;
    line-height: 18px;
}
.insight p {
    color: #7a89a6;
    font-weight: 600;
    line-height: 16px;
}
.insight small {
    display: block;
    color: #3a4860;
    font-size: 9px;
    font-style: italic;
    line-height: 15px;
}
.toast {
    position: fixed;
    right: 22px;
    bottom: 22px;
    display: flex;
    align-items: center;
    gap: 9px;
    height: 40px;
    padding: 0 15px 0 14px;
    border: 1px solid #22474a;
    border-radius: 7px;
    background-color: #050c1a;
    box-shadow: 0 8px 24px rgba(0, 0, 0, 0.5);
    color: #dbe4f3;
    font-size: 11px;
    font-weight: 500;
}
.toast span {
    display: grid;
    place-items: center;
    width: 20px;
    height: 20px;
    border-radius: 50%;
    background-color: #142c34;
    color: #74d7b2;
}
```
